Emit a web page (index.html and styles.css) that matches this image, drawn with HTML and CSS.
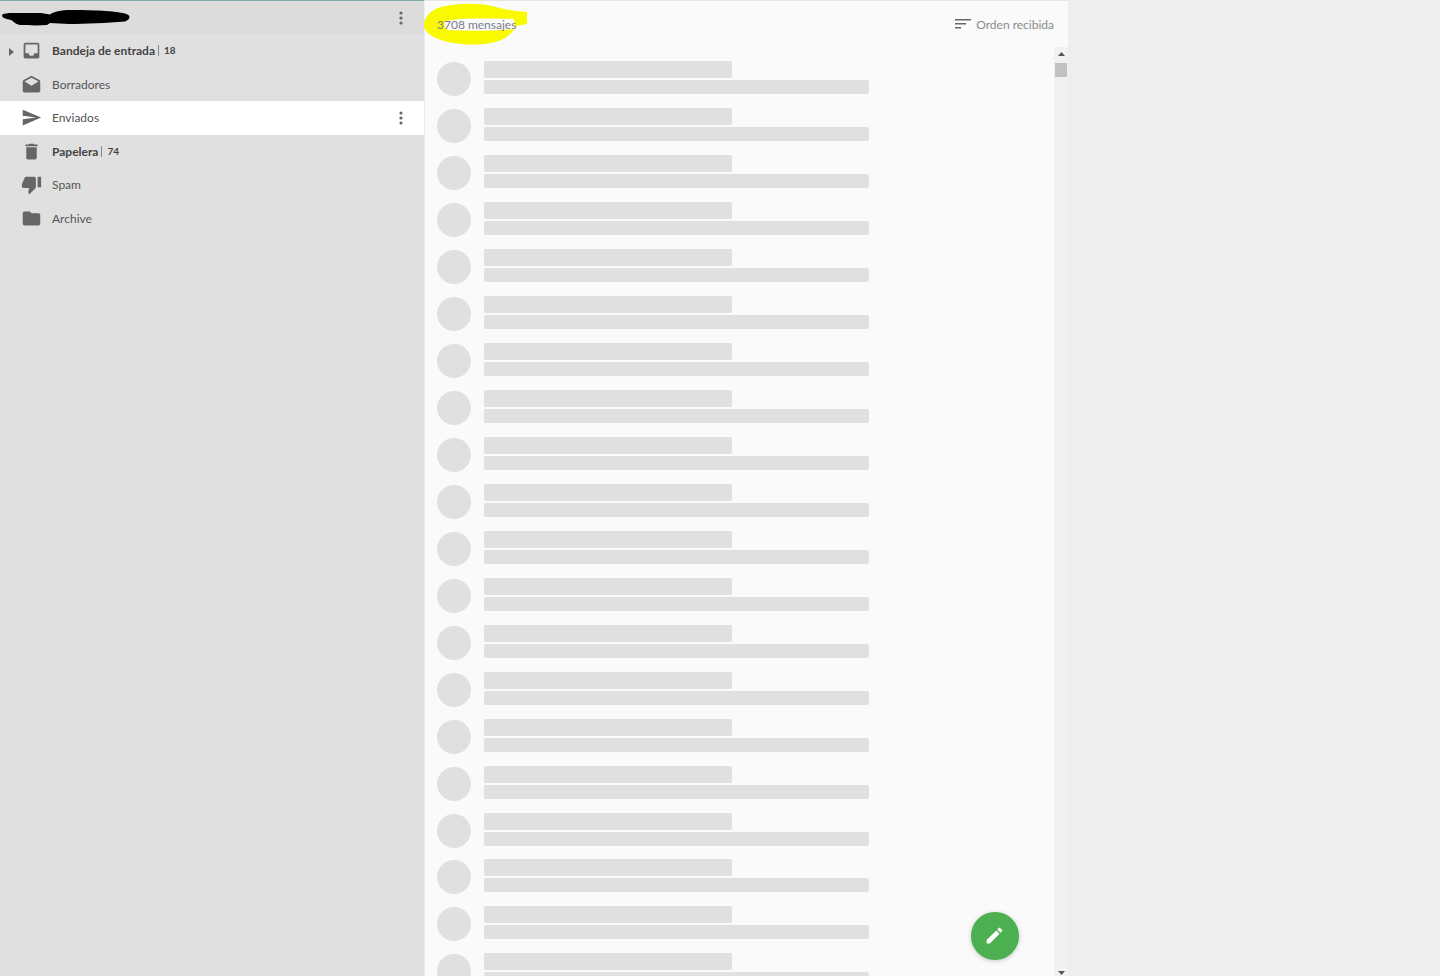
FILE: index.html
```html
<!DOCTYPE html>
<html lang="es">
<head>
<meta charset="utf-8">
<title>Correo</title>
<link rel="stylesheet" href="styles.css">
</head>
<body>
<div class="app">
  <aside class="sidebar">
    <header class="account">
      <svg class="scribble-black" viewBox="0 0 130 18" width="130" height="18"><path fill="#000" d="M1 6 C3 4 10 4 14 4 L40 4 L49 5.500 C52 3 60 1 70 1 C90 1 115 2 124 4.500 C130 6 130 10 124 12.500 C105 14 85 15 68 15 L49 14 L46 16 C35 17 25 16 19 16 C14 15 12 12 10 11 C5 10 1 9 1 6Z"/></svg>
      <svg class="more" viewBox="0 0 4 14" width="4" height="14"><circle cx="2" cy="2" r="1.6"/><circle cx="2" cy="7" r="1.6"/><circle cx="2" cy="12" r="1.6"/></svg>
    </header>
    <nav class="folders">
      <a class="folder unread">
        <svg class="caret" viewBox="0 0 5 8" width="5" height="8"><path d="M0 0l5 4-5 4z"/></svg>
        <svg class="icon" viewBox="0 0 24 24"><path d="M19 3H5a2 2 0 0 0-2 2v14a2 2 0 0 0 2 2h14a2 2 0 0 0 2-2V5a2 2 0 0 0-2-2zm0 12h-4a3 3 0 0 1-6 0H5V5h14v10z"/></svg>
        <span class="name">Bandeja de entrada</span><span class="count">18</span>
      </a>
      <a class="folder">
        <svg class="icon" viewBox="0 0 24 24"><path d="M22 8.500c0-.7-.4-1.300-.9-1.700L12 2 2.900 6.800C2.400 7.200 2 7.800 2 8.500V19a2 2 0 0 0 2 2h16a2 2 0 0 0 2-2V8.500zM12 13.500 4 8.500l8-4.300 8 4.300-8 5z"/></svg>
        <span class="name">Borradores</span>
      </a>
      <a class="folder active">
        <svg class="icon" viewBox="0 0 24 24"><path d="M2 21l21-9L2 3v7l15 2-15 2z"/></svg>
        <span class="name">Enviados</span>
        <svg class="more" viewBox="0 0 4 14" width="4" height="14"><circle cx="2" cy="2" r="1.6"/><circle cx="2" cy="7" r="1.6"/><circle cx="2" cy="12" r="1.6"/></svg>
      </a>
      <a class="folder unread">
        <svg class="icon" viewBox="0 0 24 24"><path d="M6 19a2 2 0 0 0 2 2h8a2 2 0 0 0 2-2V7H6v12zM19 4h-3.500l-1-1h-5l-1 1H5v2h14V4z"/></svg>
        <span class="name">Papelera</span><span class="count">74</span>
      </a>
      <a class="folder">
        <svg class="icon" viewBox="0 0 24 24"><path d="M15 3H6c-.8 0-1.500.5-1.800 1.200l-3 7c-.1.2-.2.500-.2.800v2a2 2 0 0 0 2 2h6.300l-1 4.600v.3c0 .4.200.8.400 1.100L9.800 23l6.600-6.600c.4-.4.600-.9.600-1.400V5a2 2 0 0 0-2-2zm4 0v12h4V3h-4z"/></svg>
        <span class="name">Spam</span>
      </a>
      <a class="folder">
        <svg class="icon" viewBox="0 0 24 24"><path d="M10 4H4a2 2 0 0 0-2 2v12a2 2 0 0 0 2 2h16a2 2 0 0 0 2-2V8a2 2 0 0 0-2-2h-8l-2-2z"/></svg>
        <span class="name">Archive</span>
      </a>
    </nav>
  </aside>
  <main class="list">
    <header class="list-head">
      <svg class="scribble-yellow" viewBox="0 0 106 46" width="106" height="46"><path fill="#f9f900" fill-rule="evenodd" d="M2 19 C6 8 16 4 24 3 C40 0 60 0 74 4 C84 7 92 8 105 9 L105 21 L94 23 C90 32 80 39 62 41 C44 43 22 40 10 33 C4 29 1 25 2 19Z M24 18 C34 15 60 15 92 16 L93 26 C70 28 40 28 26 27 C22 25 21 21 24 18Z"/></svg>
      <span class="total">3708 mensajes</span>
      <span class="sort">
        <svg viewBox="0 0 16 10" width="16" height="10"><path d="M0 0h16v1.600H0zM0 4h11v1.600H0zM0 8h6v1.600H0z"/></svg>
        Orden recibida
      </span>
    </header>
    <div class="body">
      <div class="rows">
        <div class="row"><i class="avatar"></i><div class="lines"><b class="line-a"></b><b class="line-b"></b></div></div>
        <div class="row"><i class="avatar"></i><div class="lines"><b class="line-a"></b><b class="line-b"></b></div></div>
        <div class="row"><i class="avatar"></i><div class="lines"><b class="line-a"></b><b class="line-b"></b></div></div>
        <div class="row"><i class="avatar"></i><div class="lines"><b class="line-a"></b><b class="line-b"></b></div></div>
        <div class="row"><i class="avatar"></i><div class="lines"><b class="line-a"></b><b class="line-b"></b></div></div>
        <div class="row"><i class="avatar"></i><div class="lines"><b class="line-a"></b><b class="line-b"></b></div></div>
        <div class="row"><i class="avatar"></i><div class="lines"><b class="line-a"></b><b class="line-b"></b></div></div>
        <div class="row"><i class="avatar"></i><div class="lines"><b class="line-a"></b><b class="line-b"></b></div></div>
        <div class="row"><i class="avatar"></i><div class="lines"><b class="line-a"></b><b class="line-b"></b></div></div>
        <div class="row"><i class="avatar"></i><div class="lines"><b class="line-a"></b><b class="line-b"></b></div></div>
        <div class="row"><i class="avatar"></i><div class="lines"><b class="line-a"></b><b class="line-b"></b></div></div>
        <div class="row"><i class="avatar"></i><div class="lines"><b class="line-a"></b><b class="line-b"></b></div></div>
        <div class="row"><i class="avatar"></i><div class="lines"><b class="line-a"></b><b class="line-b"></b></div></div>
        <div class="row"><i class="avatar"></i><div class="lines"><b class="line-a"></b><b class="line-b"></b></div></div>
        <div class="row"><i class="avatar"></i><div class="lines"><b class="line-a"></b><b class="line-b"></b></div></div>
        <div class="row"><i class="avatar"></i><div class="lines"><b class="line-a"></b><b class="line-b"></b></div></div>
        <div class="row"><i class="avatar"></i><div class="lines"><b class="line-a"></b><b class="line-b"></b></div></div>
        <div class="row"><i class="avatar"></i><div class="lines"><b class="line-a"></b><b class="line-b"></b></div></div>
        <div class="row"><i class="avatar"></i><div class="lines"><b class="line-a"></b><b class="line-b"></b></div></div>
        <div class="row"><i class="avatar"></i><div class="lines"><b class="line-a"></b><b class="line-b"></b></div></div>
      </div>
      <div class="scrollbar">
        <svg viewBox="0 0 7 4" width="7" height="4"><path d="M0 4l3.500-4 3.500 4z"/></svg>
        <span class="thumb"></span>
        <svg class="down" viewBox="0 0 7 4" width="7" height="4"><path d="M0 0l3.500 4 3.500-4z"/></svg>
      </div>
      <button class="fab" type="button" aria-label="Redactar">
        <svg viewBox="0 0 24 24" width="21" height="21"><path fill="#fff" d="M3 17.250V21h3.750L17.810 9.940l-3.750-3.750L3 17.250zM20.710 7.040a1 1 0 0 0 0-1.410l-2.340-2.340a1 1 0 0 0-1.410 0l-1.830 1.830 3.750 3.750 1.830-1.830z"/></svg>
      </button>
    </div>
  </main>
</div>
</body>
</html>
```
FILE: styles.css
```css
* { box-sizing: border-box; }
html, body { margin: 0; height: 100%; overflow: hidden; }
body {
  background: #eeeeee;
  font-family: Lato, "Noto Sans", sans-serif;
  font-size: 12px;
  color: #555;
}
.app { display: flex; width: 1068px; height: 976px; }

.sidebar { width: 425px; flex: none; background: #e0e0e0; border-right: 1px solid #eeeeee; }
.account {
  position: relative;
  height: 34px;
  background: #dcdcdc;
  border-top: 1px solid #7fa8a8;
  display: flex;
  align-items: center;
  justify-content: flex-end;
  padding-right: 21px;
}
.scribble-black { position: absolute; left: 1px; top: 8px; }
.more { fill: #666; flex: none; }
.folders { display: grid; grid-auto-rows: 33.5px; }
.folder {
  position: relative;
  display: flex;
  align-items: center;
  padding-left: 21px;
  padding-right: 21px;
  color: #555;
  white-space: nowrap;
}
.folder.active { background: #fff; }
.folder .more { margin-left: auto; }
.caret { position: absolute; left: 9px; top: 14px; fill: #666; }
.icon { width: 21px; height: 21px; fill: #666; flex: none; margin-right: 10px; }
.name { font-size: 12px; }
.unread .name { font-weight: 700; color: #444; }
.count {
  font-size: 10px;
  font-weight: 700;
  margin-left: 3px;
  padding-left: 5px;
  line-height: 11px;
  border-left: 1px solid #888;
  color: #444;
}

.list { width: 643px; flex: none; background: #fafafa; display: flex; flex-direction: column; height: 976px; border-top: 1px solid #e6e6e6; }
.list-head {
  position: relative;
  height: 46px;
  flex: none;
  display: flex;
  align-items: center;
  justify-content: space-between;
  padding: 0 14px 0 12px;
  color: #888;
}
.scribble-yellow { position: absolute; left: -3px; top: 2px; }
.total { position: relative; color: #7c7c8c; }
.sort { display: flex; align-items: center; gap: 5px; color: #8a8a8a; }
.sort svg { fill: #666; }

.body { position: relative; flex: 1; min-height: 0; display: flex; overflow: hidden; }
.rows { flex: 1; padding: 14px 0 0 12px; overflow: hidden; }
.row { display: flex; align-items: flex-start; height: 46.97px; gap: 13px; }
.avatar { display: block; width: 34px; height: 34px; margin-top: 1px; border-radius: 50%; background: #e0e0e0; flex: none; }
.lines { display: flex; flex-direction: column; gap: 2px; }
.lines b { display: block; background: #e0e0e0; border-radius: 2px; }
.line-a { width: 248px; height: 17px; }
.line-b { width: 385px; height: 14px; }

.scrollbar { width: 14px; flex: none; background: #f1f1f1; display: flex; flex-direction: column; align-items: center; padding-top: 5px; fill: #555; }
.thumb { width: 12px; height: 14px; margin-top: 7px; background: #c1c1c1; }
.scrollbar .down { margin-top: auto; margin-bottom: 1px; }

.fab {
  position: absolute;
  left: 546px;
  top: 865px;
  width: 47.5px;
  height: 47.5px;
  border: 0;
  padding: 0;
  border-radius: 50%;
  background: #4caf50;
  box-shadow: 0 1px 5px rgba(0,0,0,.2);
  display: flex;
  align-items: center;
  justify-content: center;
}
```
